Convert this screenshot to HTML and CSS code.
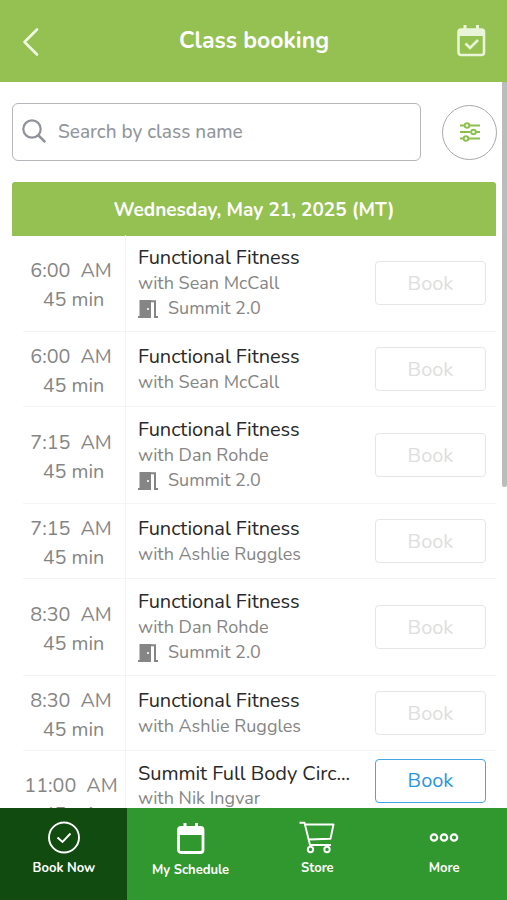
FILE: index.html
```html
<!DOCTYPE html>
<html lang="en">
<head>
<meta charset="utf-8">
<title>Class booking</title>
<link rel="stylesheet" href="styles.css">
</head>
<body>
<svg class="defs" width="0" height="0">
  <symbol id="door" viewBox="0 0 20 19"><path fill="#858585" d="M1.500 0H13v18H0v-2h1.500z"/><path d="M13 1.200h4v15.800H20" fill="none" stroke="#858585" stroke-width="2"/><circle cx="10" cy="9" r="1.100" fill="#fff"/></symbol>
</svg>
<div class="app">
  <header class="header">
    <svg class="back" width="18" height="30" viewBox="0 0 18 30"><path d="M15 2.500 2.500 15 15 27.500" fill="none" stroke="#f1f8e4" stroke-width="2.600" stroke-linecap="round" stroke-linejoin="round"/></svg>
    <h1>Class booking</h1>
    <svg class="cal" width="30" height="33" viewBox="0 0 30 33"><path d="M8 1v5M20.500 1v5" stroke="#eaf5d8" stroke-width="3"/><rect x="1.500" y="5.500" width="25.500" height="25.500" rx="2.500" fill="none" stroke="#eaf5d8" stroke-width="2.600"/><path d="M1.500 5H27v7H1.500z" fill="#eaf5d8"/><path d="m8.500 19.500 4.500 4.500 8-8" fill="none" stroke="#eaf5d8" stroke-width="2.600"/></svg>
  </header>
  <main class="main">
    <div class="tools">
      <div class="search">
        <svg width="26" height="26" viewBox="0 0 26 26" fill="none" stroke="#8f9399" stroke-width="2.200"><circle cx="10" cy="10" r="8.700"/><path d="m16.300 16.300 7 6.800" stroke-width="2.600"/></svg>
        <span>Search by class name</span>
      </div>
      <div class="filter">
        <svg width="22" height="20" viewBox="0 0 22 20" fill="none" stroke="#8cc04b" stroke-width="1.900"><path d="M1 3.500h4.500M10.500 3.500H21M1 10h10.500M16.500 10H21M1 16.500h3.500M9.500 16.500H21"/><circle cx="8" cy="3.500" r="2.300"/><circle cx="14.500" cy="10" r="2.300"/><circle cx="7" cy="16.500" r="2.300"/></svg>
      </div>
    </div>
    <h2 class="date">Wednesday, May 21, 2025 (MT)</h2>
    <div class="list">
      <article class="row tall">
        <div class="time"><div class="hour"><span>6:00</span><span>AM</span></div><div class="dur">45 min</div></div>
        <div class="info"><h3>Functional Fitness</h3><p>with Sean McCall</p><p class="room"><svg width="20" height="19"><use href="#door"/></svg>Summit 2.0</p></div>
        <div class="book">Book</div>
      </article>
      <article class="row">
        <div class="time"><div class="hour"><span>6:00</span><span>AM</span></div><div class="dur">45 min</div></div>
        <div class="info"><h3>Functional Fitness</h3><p>with Sean McCall</p></div>
        <div class="book">Book</div>
      </article>
      <article class="row tall">
        <div class="time"><div class="hour"><span>7:15</span><span>AM</span></div><div class="dur">45 min</div></div>
        <div class="info"><h3>Functional Fitness</h3><p>with Dan Rohde</p><p class="room"><svg width="20" height="19"><use href="#door"/></svg>Summit 2.0</p></div>
        <div class="book">Book</div>
      </article>
      <article class="row">
        <div class="time"><div class="hour"><span>7:15</span><span>AM</span></div><div class="dur">45 min</div></div>
        <div class="info"><h3>Functional Fitness</h3><p>with Ashlie Ruggles</p></div>
        <div class="book">Book</div>
      </article>
      <article class="row tall">
        <div class="time"><div class="hour"><span>8:30</span><span>AM</span></div><div class="dur">45 min</div></div>
        <div class="info"><h3>Functional Fitness</h3><p>with Dan Rohde</p><p class="room"><svg width="20" height="19"><use href="#door"/></svg>Summit 2.0</p></div>
        <div class="book">Book</div>
      </article>
      <article class="row">
        <div class="time"><div class="hour"><span>8:30</span><span>AM</span></div><div class="dur">45 min</div></div>
        <div class="info"><h3>Functional Fitness</h3><p>with Ashlie Ruggles</p></div>
        <div class="book">Book</div>
      </article>
      <article class="row tall last">
        <div class="time"><div class="hour"><span>11:00</span><span>AM</span></div><div class="dur">45 min</div></div>
        <div class="info"><h3>Summit Full Body Circ...</h3><p>with Nik Ingvar</p></div>
        <div class="book open">Book</div>
      </article>
    </div>
    <div class="scrollbar"></div>
  </main>
  <nav class="nav">
    <div class="tab active">
      <svg width="34" height="34" viewBox="0 0 34 34" fill="none" stroke="#fff" stroke-width="1.900"><circle cx="17" cy="17.500" r="15"/><path d="m10.500 17.500 5 4.500 8-8.500"/></svg>
      <span>Book Now</span>
    </div>
    <div class="tab schedule">
      <svg width="30" height="34" viewBox="0 0 30 34"><path d="M9 1v6M20.500 1v6" stroke="#fff" stroke-width="3"/><rect x="2.500" y="5.500" width="24.500" height="25" rx="2.500" fill="none" stroke="#fff" stroke-width="2.800"/><path d="M2 6h25.500v7H2z" fill="#fff"/></svg>
      <span>My Schedule</span>
    </div>
    <div class="tab">
      <svg width="36" height="34" viewBox="0 0 36 34" fill="none" stroke="#fff" stroke-width="1.900" stroke-linejoin="round"><path d="M.5 2.800H5.500l5.500 22.200h21M6.500 4.500h28L31.500 18.800 9.500 19.500"/><circle cx="11.500" cy="29.500" r="2.700"/><circle cx="28" cy="29.500" r="2.700"/></svg>
      <span>Store</span>
    </div>
    <div class="tab">
      <svg width="30" height="34" viewBox="0 0 30 34" fill="none" stroke="#fff" stroke-width="2.200"><circle cx="5" cy="17.500" r="3.200"/><circle cx="15" cy="17.500" r="3.200"/><circle cx="25" cy="17.500" r="3.200"/></svg>
      <span>More</span>
    </div>
  </nav>
</div>
</body>
</html>
```
FILE: styles.css
```css
* { box-sizing: border-box; margin: 0; padding: 0; }
body { font-family: Nunito, Lato, "Open Sans", sans-serif; background: #fff; overflow: hidden; }
svg { display: block; flex: none; }
.defs { position: absolute; }
.app { display: flex; flex-direction: column; width: 507px; height: 900px; }
.header { flex: none; height: 82px; background: #94c152; display: flex; align-items: center; justify-content: space-between; padding: 0 20px 0 22px; }
h1 { font-size: 23px; line-height: 30px; font-weight: 700; color: #fff; margin-top: -1px; margin-left: 11px; }
.back { margin-top: 2px; }
.cal { margin-top: -2px; }
.main { flex: 1; min-height: 0; overflow: hidden; position: relative; padding: 21px 11px 0 12px; }
.tools { display: flex; justify-content: space-between; align-items: center; height: 58px; }
.search { width: 409px; height: 58px; border: 1.500px solid #b3b6ba; border-radius: 6px; display: flex; align-items: center; gap: 10px; padding-left: 9px; font-size: 19px; color: #92969b; font-weight: 500; }
.search svg { margin-top: -1px; }
.filter { width: 55px; height: 55px; border: 1px solid #a9a9ad; border-radius: 50%; display: flex; align-items: center; justify-content: center; margin-right: -1px; }
.date { margin-top: 21px; height: 54px; background: #94c152; border-radius: 3px 3px 0 0; color: #fff; font-size: 19px; line-height: 56px; font-weight: 700; text-align: center; }
.list { margin: -1px 0 0 11px; }
.row { display: flex; align-items: center; height: 75px; border-bottom: 1px solid #f3f4f4; }
.row.tall { height: 97px; }
.time { width: 103px; height: 100%; border-right: 1px solid #f4f4f4; display: flex; flex-direction: column; justify-content: center; align-items: center; padding-top: 3px; font-size: 19.800px; line-height: 29px; color: #858585; }
.hour { display: flex; gap: 10px; margin-right: 6px; }
.dur { margin-right: 1px; }
.info { flex: 1; padding-left: 12px; }
h3 { font-size: 20px; line-height: 25px; font-weight: 400; color: #292929; letter-spacing: -.06px; white-space: nowrap; }
.info p { font-size: 18px; line-height: 26px; color: #858585; }
.info .room { display: flex; align-items: center; gap: 10px; line-height: 25px; }
.room svg { margin-top: 2px; }
.book { width: 111px; height: 44px; border: 1.500px solid #e6e6e6; border-radius: 4px; color: #dedede; font-size: 20px; line-height: 43px; text-align: center; margin-right: 10px; }
.last .info { align-self: flex-start; padding-top: 10px; }
.last p { margin-top: -1px; }
.last .book { align-self: flex-start; margin-top: 8px; }
.book.open { border-color: #44a5ea; color: #2b95e0; line-height: 42px; }
.last .time { padding-top: 2px; }
.scrollbar { position: absolute; right: 0; top: 0; width: 5px; height: 405px; background: #bcbcbc; border-radius: 0 0 2px 2px; }
.nav { flex: none; height: 92px; display: grid; grid-template-columns: repeat(4, 1fr); background: #31982f; color: #fff; }
.tab { display: flex; flex-direction: column; align-items: center; padding: 12px 0 0 1px; font-size: 13px; line-height: 18px; font-weight: 700; gap: 5px; }
.tab.active { background: #114b0f; }
.tab.schedule { padding-top: 14px; }
```
